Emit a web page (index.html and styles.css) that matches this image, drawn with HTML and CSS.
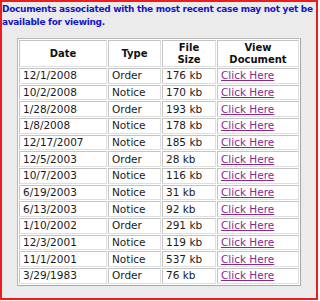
FILE: index.html
```html
<!DOCTYPE html>
<html>
<head>
<meta charset="utf-8">
<link rel="stylesheet" href="styles.css">
</head>
<body>
<div class="frame">
  <p class="notice">Documents associated with the most recent case may not yet be available for viewing.</p>
  <table class="docs">
    <thead>
      <tr><th class="c-date">Date</th><th class="c-type">Type</th><th class="c-size">File<br>Size</th><th class="c-view">View<br>Document</th></tr>
    </thead>
    <tbody>
      <tr><td>12/1/2008</td><td>Order</td><td>176 kb</td><td><a href="#">Click Here</a></td></tr>
      <tr><td>10/2/2008</td><td>Notice</td><td>170 kb</td><td><a href="#">Click Here</a></td></tr>
      <tr><td>1/28/2008</td><td>Order</td><td>193 kb</td><td><a href="#">Click Here</a></td></tr>
      <tr><td>1/8/2008</td><td>Notice</td><td>178 kb</td><td><a href="#">Click Here</a></td></tr>
      <tr><td>12/17/2007</td><td>Notice</td><td>185 kb</td><td><a href="#">Click Here</a></td></tr>
      <tr><td>12/5/2003</td><td>Order</td><td>28 kb</td><td><a href="#">Click Here</a></td></tr>
      <tr><td>10/7/2003</td><td>Notice</td><td>116 kb</td><td><a href="#">Click Here</a></td></tr>
      <tr><td>6/19/2003</td><td>Notice</td><td>31 kb</td><td><a href="#">Click Here</a></td></tr>
      <tr><td>6/13/2003</td><td>Notice</td><td>92 kb</td><td><a href="#">Click Here</a></td></tr>
      <tr><td>1/10/2002</td><td>Order</td><td>291 kb</td><td><a href="#">Click Here</a></td></tr>
      <tr><td>12/3/2001</td><td>Notice</td><td>119 kb</td><td><a href="#">Click Here</a></td></tr>
      <tr><td>11/1/2001</td><td>Notice</td><td>537 kb</td><td><a href="#">Click Here</a></td></tr>
      <tr><td>3/29/1983</td><td>Order</td><td>76 kb</td><td><a href="#">Click Here</a></td></tr>
    </tbody>
  </table>
</div>
</body>
</html>
```

FILE: styles.css
```css
html, body {
  margin: 0;
  padding: 0;
  background: #ffffff;
}
.frame {
  box-sizing: border-box;
  width: 318px;
  height: 300px;
  border: 2px solid #ee1c1c;
  background: #ebebeb;
  padding: 1px 0 0 0;
  font-family: "DejaVu Sans", Verdana, sans-serif;
}
.notice {
  margin: 0;
  font-size: 9px;
  letter-spacing: -0.3px;
  line-height: 12.5px;
  font-weight: bold;
  color: #1515c8;
}
.docs {
  margin: 10px auto 0;
  width: 284px;
  border-collapse: separate;
  border-spacing: 1px;
  border: 1px solid #b8b8b8;
  border-right-color: #a8a8a8;
  border-bottom-color: #a8a8a8;
  background: #ffffff;
  font-size: 10.5px;
  color: #1a1a1a;
  table-layout: fixed;
}
.docs th, .docs td {
  border: 1px solid #c4c4c4;
  border-right-color: #dedede;
  border-bottom-color: #dedede;
  background: #fff;
  padding: 0 0 0 3px;
}
.docs th {
  height: 25px;
  font-size: 10px;
  font-weight: bold;
  text-align: center;
  line-height: 12px;
  padding: 0 2px;
  color: #111;
}
.docs td {
  height: 13.67px;
  line-height: 13px;
  text-align: left;
  white-space: nowrap;
}
.c-date { width: 82px; }
.c-type { width: 47px; }
.c-size { width: 48px; }
.docs a {
  color: #8a2a8a;
  text-decoration: underline;
}
```
